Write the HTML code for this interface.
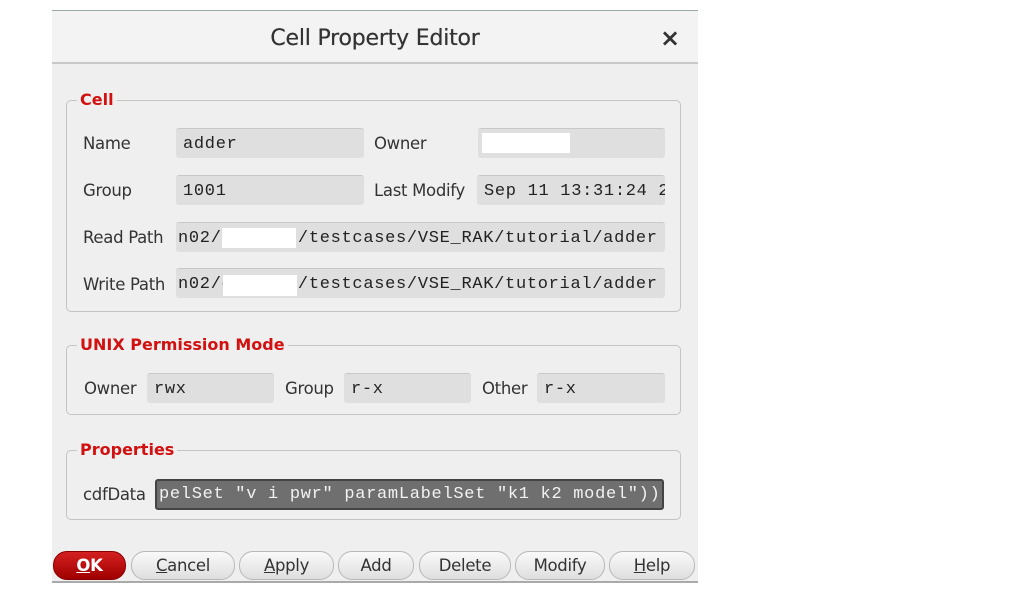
<!DOCTYPE html>
<html><head><meta charset="utf-8"><style>
*{margin:0;padding:0;box-sizing:border-box}
body{width:1016px;height:589px;background:#fff;position:relative;overflow:hidden;font-family:"DejaVu Sans","Liberation Sans",sans-serif;color:#333}
.a{position:absolute}
#dlg{left:52px;top:10px;width:646px;height:572px;background:#efefef;border-top:1px solid #9aa;}
#title{left:52px;top:11px;width:646px;height:53px;background:#f3f3f3;border-bottom:2px solid #c8c8c8;text-align:center;font-size:22px;line-height:56px;color:#333;font-weight:normal;letter-spacing:-0.2px;text-shadow:0 0 0.4px #333}
.box{border:1px solid #c4c4c4;border-radius:5px}
.leg{background:#efefef;color:#d21010;font-weight:bold;font-size:16px;padding:0 3px;line-height:18px}
.lbl{font-size:16.5px;color:#333;line-height:20px;letter-spacing:-0.3px}
.f{background:#dfdfdf;border-top:1px solid #c8c8c8;border-radius:3px;font-family:"Liberation Mono",monospace;font-size:17px;letter-spacing:0.7px;color:#222;line-height:32px;padding-left:7px;white-space:pre;overflow:hidden}
.w{background:#fff}
.b{top:551px;height:29px;border:1px solid #b8b8b8;border-radius:14px;background:linear-gradient(#fafafa,#dedede);font-size:16.5px;text-align:center;line-height:28px;color:#333;letter-spacing:-0.3px}
</style></head><body>
<div class="a" id="dlg"></div>
<div class="a" id="title">Cell Property Editor</div>
<div class="a" style="left:660px;top:24px;font-size:24px;font-weight:bold;color:#333">×</div>

<div class="a box" style="left:66px;top:100px;width:615px;height:212px"></div>
<div class="a leg" style="left:77px;top:91px">Cell</div>
<div class="a lbl" style="left:83px;top:134px">Name</div>
<div class="a f" style="left:176px;top:128px;width:188px;height:30px">adder</div>
<div class="a lbl" style="left:374px;top:134px">Owner</div>
<div class="a f" style="left:478px;top:128px;width:187px;height:30px"></div>
<div class="a w" style="left:482px;top:133px;width:88px;height:20px"></div>
<div class="a lbl" style="left:83px;top:181px">Group</div>
<div class="a f" style="left:176px;top:175px;width:188px;height:30px">1001</div>
<div class="a lbl" style="left:374px;top:181px">Last Modify</div>
<div class="a f" style="left:477px;top:175px;width:188px;height:30px">Sep 11 13:31:24 2</div>
<div class="a lbl" style="left:83px;top:228px">Read Path</div>
<div class="a f" style="left:176px;top:222px;width:489px;height:30px;padding-left:2px">n02/d      /testcases/VSE_RAK/tutorial/adder</div>
<div class="a w" style="left:222px;top:228px;width:74px;height:20px"></div>
<div class="a lbl" style="left:83px;top:275px">Write Path</div>
<div class="a f" style="left:176px;top:268px;width:489px;height:30px;padding-left:2px">n02/d      /testcases/VSE_RAK/tutorial/adder</div>
<div class="a w" style="left:223px;top:275px;width:74px;height:21px"></div>

<div class="a box" style="left:66px;top:345px;width:615px;height:70px"></div>
<div class="a leg" style="left:77px;top:336px">UNIX Permission Mode</div>
<div class="a lbl" style="left:84px;top:379px">Owner</div>
<div class="a f" style="left:147px;top:373px;width:127px;height:30px">rwx</div>
<div class="a lbl" style="left:285px;top:379px">Group</div>
<div class="a f" style="left:344px;top:373px;width:127px;height:30px">r-x</div>
<div class="a lbl" style="left:482px;top:379px">Other</div>
<div class="a f" style="left:537px;top:373px;width:128px;height:30px">r-x</div>

<div class="a box" style="left:66px;top:450px;width:615px;height:70px"></div>
<div class="a leg" style="left:77px;top:441px">Properties</div>
<div class="a lbl" style="left:83px;top:485px">cdfData</div>
<div class="a f" style="left:155px;top:479px;width:509px;height:31px;background:#6f6f6f;color:#f2f2f2;border:2px solid #444;line-height:28px;padding-left:2px">pelSet "v i pwr" paramLabelSet "k1 k2 model"))</div>

<div class="a b" style="left:53px;width:73px;background:linear-gradient(#d42020,#a00000);border-color:#800;color:#fff;font-weight:bold"><u>O</u>K</div>
<div class="a b" style="left:131px;width:104px"><u>C</u>ancel</div>
<div class="a b" style="left:239px;width:95px"><u>A</u>pply</div>
<div class="a b" style="left:338px;width:76px">Add</div>
<div class="a b" style="left:419px;width:92px">Delete</div>
<div class="a b" style="left:515px;width:90px">Modify</div>
<div class="a b" style="left:609px;width:86px"><u>H</u>elp</div>
<div class="a" style="left:52px;top:581px;width:646px;height:2px;background:#aaa"></div>
</body></html>
